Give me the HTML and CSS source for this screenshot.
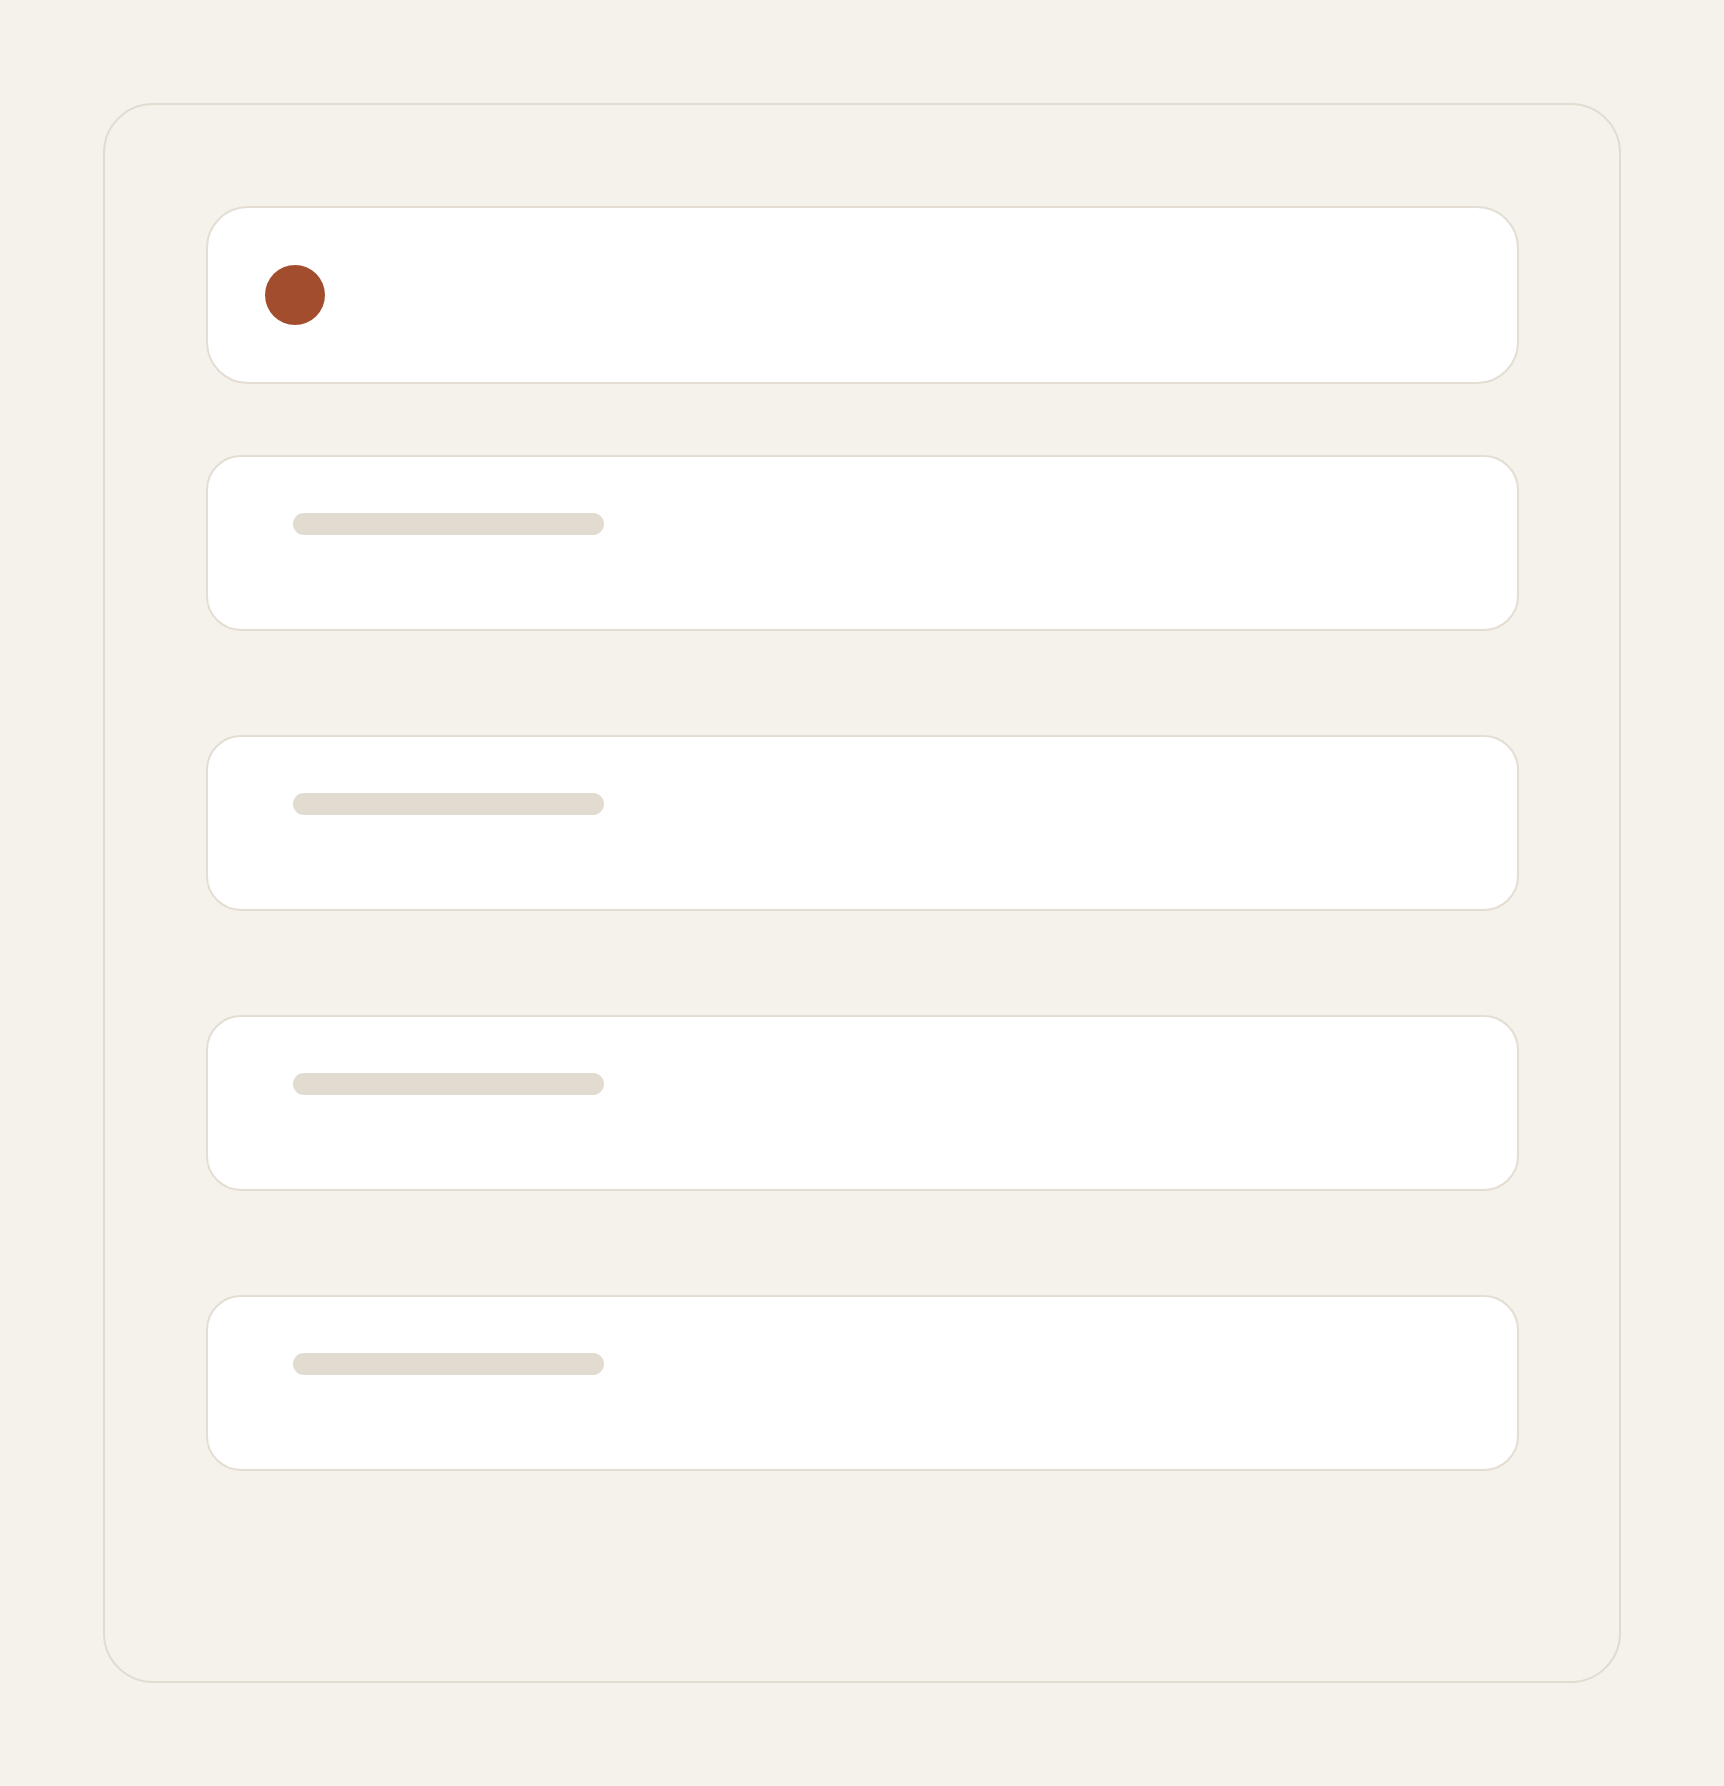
FILE: index.html
```html
<!DOCTYPE html>
<html lang="en">
<head>
  <meta charset="UTF-8" />
  <meta name="viewport" content="width=device-width, initial-scale=1.0"/>
  <title>Feed</title>
  <link rel="stylesheet" href="styles.css">
</head>
<body>

  <div class="frame">

    <!-- top card with status dot -->
    <div class="card card-head">
      <span class="dot"></span>
    </div>

    <!-- placeholder rows -->
    <div class="list">
      <div class="card card-row"><span class="line"></span></div>
      <div class="card card-row"><span class="line"></span></div>
      <div class="card card-row"><span class="line"></span></div>
      <div class="card card-row"><span class="line"></span></div>
    </div>

  </div>

</body>
</html>
```

FILE: styles.css
```css
* {
  box-sizing: border-box;
  margin: 0;
  padding: 0;
  font-family: 'Liberation Sans', Arial, sans-serif;
}

body {
  background: #f5f2eb;
  padding: 103px;
}

.frame {
  height: 1580px;
  border: 2px solid #e1dbd0;
  border-radius: 50px;
  padding: 101px 100px 101px 101px;
}

.card {
  background: #fff;
  border: 2px solid #e3ddd3;
}

.card-head {
  height: 178px;
  border-radius: 42px;
  display: flex;
  align-items: center;
  padding-left: 57px;
}

.dot {
  width: 60px;
  height: 60px;
  border-radius: 50%;
  background: #a24e2e;
}

.list {
  display: flex;
  flex-direction: column;
  gap: 104px;
  margin-top: 71px;
}

.card-row {
  height: 176px;
  border-radius: 35px;
  padding: 56px 0 0 85px;
}

.line {
  display: block;
  width: 311px;
  height: 22px;
  border-radius: 11px;
  background: #e1dbd0;
}
```
